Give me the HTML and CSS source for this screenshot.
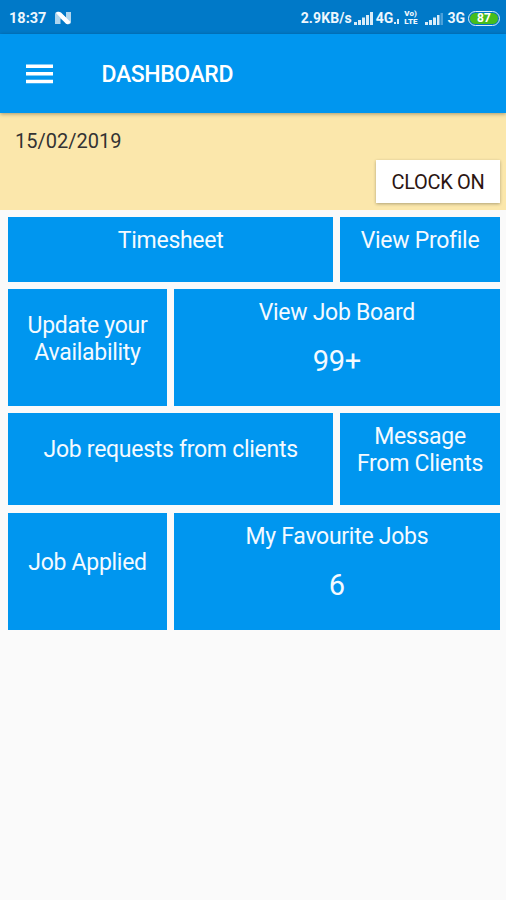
FILE: index.html
```html
<!DOCTYPE html>
<html lang="en">

<head>
    <meta charset="UTF-8">
    <meta name="viewport" content="width=device-width, initial-scale=1.0">
    <title>Dashboard</title>
    <link rel="stylesheet" href="styles.css">
</head>

<body>
    <div class="status">
        <span class="time">18:37</span>
        <svg class="n-icon" width="17" height="14" viewBox="0 0 17 14">
            <path d="M0 13V4Q0 0 4 1L11 6.500V1h5v9.500Q16 14 12 13L5.500 7.500V13z" opacity=".8" />
            <path d="M1 2Q3 0 6 1.500L15.500 11Q14 14 11 12.800z" fill="#fff" />
        </svg>
        <span class="speed">2.9KB/s</span>
        <svg class="signal" width="19" height="13" viewBox="0 0 19 13">
            <path d="M0 10h3v3H0zM4 8h3v5H4zM8 5.500h3V13H8zM12 3h3v10h-3zM16 0h3v13h-3z" />
        </svg>
        <span class="net">4G</span>
        <svg class="data" width="6" height="5" viewBox="0 0 6 5">
            <path d="M0 3h2v2H0zM3 0h2v5H3z" />
        </svg>
        <span class="volte"><b>Vo)</b><b>LTE</b></span>
        <svg class="signal second" width="18" height="12" viewBox="0 0 18 12">
            <path d="M0 9h3v3H0zM4 7h3v5H4zM8 4.500h3V12H8zM12 2h2.500v10H12z" />
            <path d="M15.500 0H18v12h-2.500z" opacity=".35" />
        </svg>
        <span class="net">3G</span>
        <span class="battery"><span class="level">87</span></span>
    </div>

    <div class="header">
        <svg class="menu" width="27" height="20" viewBox="0 0 27 20">
            <path d="M0 .5h27v3.500H0zM0 8h27v3.500H0zM0 15.800h27v3.500H0z" />
        </svg>
        <h1>DASHBOARD</h1>
    </div>

    <div class="clock">
        <p class="date">15/02/2019</p>
        <button class="clock-btn">CLOCK ON</button>
    </div>

    <ul class="tiles">
        <li class="wide">Timesheet</li>
        <li>View Profile</li>
        <li class="middle">Update your Availability</li>
        <li class="wide">View Job Board<span class="count">99+</span></li>
        <li class="wide middle">Job requests from clients</li>
        <li>Message From Clients</li>
        <li class="applied">Job Applied</li>
        <li class="wide">My Favourite Jobs<span class="count">6</span></li>
    </ul>
</body>

</html>
```

FILE: styles.css
```css
* {
    padding: 0;
    margin: 0;
    list-style: none;
    box-sizing: border-box;
}

body {
    min-height: 900px;
    background-color: #fafafa;
    font-family: Roboto, "Liberation Sans", sans-serif;
}

/* status bar */
.status {
    display: flex;
    align-items: center;
    height: 34px;
    padding: 2px 6px 0 9px;
    background-color: #0079c8;
    color: #eef7fd;
    font-size: 14.5px;
    font-weight: bold;
    white-space: nowrap;
}

.status svg {
    fill: #d9ecf8;
    flex: none;
}

.n-icon {
    margin-left: 9px;
}

.speed {
    margin-left: auto;
    font-size: 14px;
    letter-spacing: .1px;
}

.signal {
    margin: 0 3px 0 2px;
}

.net {
    font-size: 14px;
}

.data {
    margin: 6px 4px 0 1px;
}

.volte {
    display: flex;
    flex-direction: column;
    font-size: 8px;
    line-height: 8px;
}

.second {
    margin: 1px 4px 0 8px;
}

.battery {
    width: 32px;
    height: 15px;
    margin-left: 3px;
    padding: 1px;
    border: 1.5px solid #d9ecf8;
    border-radius: 8px;
}

.level {
    display: block;
    height: 100%;
    border-radius: 6px;
    background-color: #45bd1c;
    color: #fff;
    font-size: 12px;
    line-height: 11px;
    text-align: center;
}

/* app bar */
.header {
    position: relative;
    display: flex;
    align-items: center;
    height: 79px;
    padding-left: 26px;
    background-color: #0096ef;
    box-shadow: 0 1px 4px rgba(0, 0, 0, .35);
}

.menu {
    fill: #fff;
}

.header h1 {
    margin-left: 48.5px;
    padding-top: 2px;
    color: #fff;
    font-size: 23px;
    font-weight: 500;
    letter-spacing: -.4px;
}

/* date and clock on */
.clock {
    display: flex;
    flex-direction: column;
    height: 97px;
    padding: 16px 6px 0 15px;
    background-color: #fbe7ab;
}

.date {
    color: #333;
    font-size: 20px;
    line-height: 25px;
}

.clock-btn {
    align-self: flex-end;
    width: 124px;
    height: 43px;
    margin-top: 6px;
    padding-top: 1px;
    border: none;
    background-color: #fff;
    box-shadow: 0 1px 3px rgba(0, 0, 0, .3);
    color: #2b1512;
    font-family: inherit;
    font-size: 20px;
    letter-spacing: -.3px;
}

/* tiles */
.tiles {
    display: grid;
    grid-template-columns: repeat(3, 1fr);
    grid-template-rows: 65px 117px 92px 117px;
    gap: 7.2px;
    padding: 7px 6.5px 0 8px;
}

.tiles li {
    padding: 10px 12px 0;
    background-color: #0096ef;
    color: #f4faff;
    font-size: 23px;
    line-height: 27px;
    letter-spacing: -.28px;
    text-align: center;
}

.tiles .wide {
    grid-column: span 2;
}

.tiles .middle {
    padding-top: 23px;
}

.tiles .applied {
    padding-top: 36px;
}

.count {
    display: block;
    margin-top: 18px;
    font-size: 29px;
    line-height: 34px;
}
```
